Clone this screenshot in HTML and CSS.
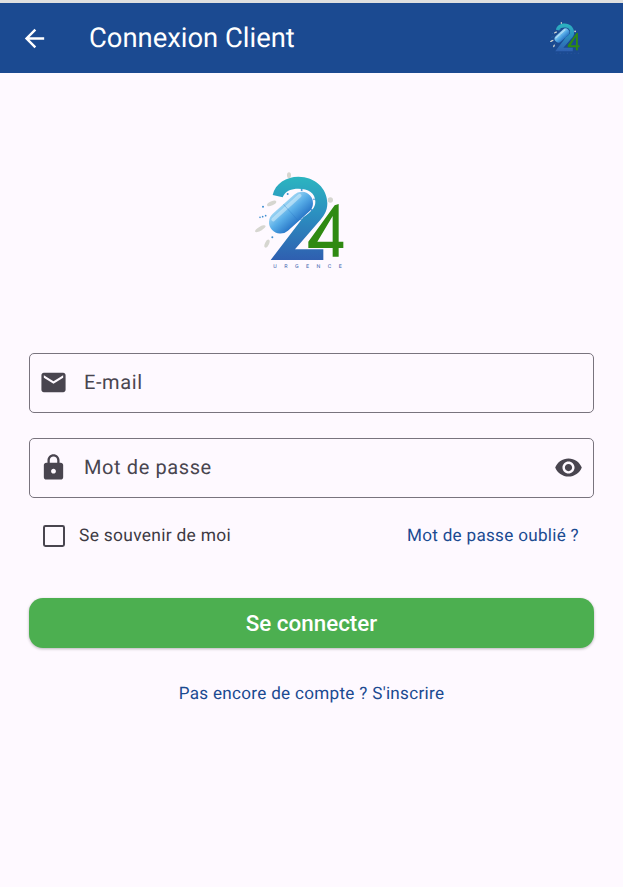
FILE: index.html
```html
<!DOCTYPE html>
<html lang="fr">
<head>
<meta charset="utf-8">
<title>Connexion Client</title>
<link rel="stylesheet" href="styles.css">
</head>
<body>
<header class="appbar">
  <svg class="icon back" viewBox="0 0 24 24"><path d="M20 11H7.83l5.59-5.59L12 4l-8 8 8 8 1.41-1.41L7.83 13H20v-2z"/></svg>
  <h1 class="title">Connexion Client</h1>
  <svg class="logo-small" viewBox="0 0 360 360">
    <defs>
      <linearGradient id="g2" x1="0" y1="0" x2="0" y2="1">
        <stop offset="0" stop-color="#2cb5c0"/>
        <stop offset=".45" stop-color="#2b8fc0"/>
        <stop offset="1" stop-color="#2f5fb0"/>
      </linearGradient>
      <linearGradient id="gc" x1="0" y1="0" x2="0" y2="1">
        <stop offset="0" stop-color="#9ad3f3"/>
        <stop offset=".45" stop-color="#58aee8"/>
        <stop offset="1" stop-color="#2a78c8"/>
      </linearGradient>
      <symbol id="logo" viewBox="0 0 360 360">
        <path fill="url(#g2)" d="M98 105C105 70 140 50 175 50C225 50 262 85 262 130C262 155 250 170 235 187L165 268H250V300H92L190 172C215 153 226 143 226 125C226 99 205 86 175 86C155 86 135 92 128 112Z"/>
        <path fill="#2f8a12" fill-rule="evenodd" d="M205 245L284 136L296 132V245H310V264H296V290H278V264H205ZM278 168L232 245H278Z"/>
        <g transform="rotate(-42 153 158)">
          <rect x="76" y="124" width="154" height="68" rx="34" fill="url(#gc)"/>
          <rect x="94" y="132" width="118" height="11" rx="5.5" fill="#d8f0fc" opacity=".55"/>
          <path d="M153 124V192" stroke="#2a78c8" stroke-width="1.5" opacity=".6"/>
        </g>
        <g fill="#d6d6d0">
          <ellipse cx="147" cy="46" rx="6" ry="9"/>
          <ellipse cx="95" cy="130" rx="15" ry="6" transform="rotate(-25 95 130)"/>
          <ellipse cx="61" cy="206" rx="18" ry="6" transform="rotate(-30 61 206)"/>
          <ellipse cx="81" cy="251" rx="6" ry="13" transform="rotate(25 81 251)"/>
          <circle cx="271" cy="120" r="8"/>
        </g>
        <g fill="#3f8fd0">
          <circle cx="69" cy="140" r="3"/><circle cx="60" cy="172" r="2.5"/><circle cx="68" cy="170" r="2.5"/><circle cx="77" cy="167" r="2.5"/>
          <circle cx="97" cy="232" r="3"/><circle cx="143" cy="102" r="3"/><circle cx="185" cy="90" r="3"/><circle cx="222" cy="118" r="2.5"/><circle cx="215" cy="150" r="3"/><circle cx="183" cy="178" r="2.5"/>
        </g>
        <text class="logo-word" x="100" y="324" textLength="205">URGENCE</text>
      </symbol>
    </defs>
    <use href="#logo"/>
  </svg>
</header>
<main class="page">
  <svg class="logo-large" viewBox="0 0 360 360"><use href="#logo"/></svg>
  <form class="form">
    <div class="field">
      <svg class="icon field-icon" viewBox="0 0 24 24"><path d="M20 4H4c-1.1 0-1.99.9-1.99 2L2 18c0 1.1.9 2 2 2h16c1.1 0 2-.9 2-2V6c0-1.1-.9-2-2-2zm0 4l-8 5-8-5V6l8 5 8-5v2z"/></svg>
      <span class="placeholder">E-mail</span>
    </div>
    <div class="field">
      <svg class="icon field-icon" viewBox="0 0 24 24"><path d="M18 8h-1V6c0-2.76-2.24-5-5-5S7 3.24 7 6v2H6c-1.1 0-2 .9-2 2v10c0 1.1.9 2 2 2h12c1.1 0 2-.9 2-2V10c0-1.1-.9-2-2-2zm-6 9c-1.1 0-2-.9-2-2s.9-2 2-2 2 .9 2 2-.9 2-2 2zm3.1-9H8.9V6c0-1.71 1.39-3.1 3.1-3.1 1.71 0 3.1 1.39 3.1 3.1v2z"/></svg>
      <span class="placeholder">Mot de passe</span>
      <svg class="icon field-icon eye" viewBox="0 0 24 24"><path d="M12 4.5C7 4.5 2.73 7.61 1 12c1.73 4.39 6 7.5 11 7.5s9.27-3.11 11-7.5c-1.73-4.39-6-7.5-11-7.5zM12 17c-2.76 0-5-2.24-5-5s2.24-5 5-5 5 2.24 5 5-2.24 5-5 5zm0-8c-1.66 0-3 1.34-3 3s1.34 3 3 3 3-1.34 3-3-1.34-3-3-3z"/></svg>
    </div>
    <div class="options">
      <span class="remember"><span class="checkbox"></span><span class="remember-label">Se souvenir de moi</span></span>
      <a class="link">Mot de passe oublié ?</a>
    </div>
    <button class="submit" type="button">Se connecter</button>
    <a class="link signup">Pas encore de compte ? S'inscrire</a>
  </form>
</main>
</body>
</html>
```

FILE: styles.css
```css
* { box-sizing: border-box; }
html, body { margin: 0; height: 100%; }
body {
  background: #fef9ff;
  font-family: Roboto, "Liberation Sans", sans-serif;
  color: #49454f;
  text-rendering: geometricPrecision;
}
.appbar {
  height: 73px;
  border-top: 3px solid #dfe0e0;
  background: #1b4a91;
  display: flex;
  align-items: center;
  padding: 0 38px 0 20px;
  color: #fff;
}
.icon { display: block; fill: currentColor; flex: none; }
.back { width: 29px; height: 29px; }
.title {
  margin: 0 0 1px 40px;
  font-size: 27.4px;
  font-weight: 400;
  flex: 1;
}
.logo-small { width: 40px; height: 40px; flex: none; }
.logo-word {
  font-family: Roboto, sans-serif;
  font-size: 16px;
  fill: #3a63ad;
}
.page { padding: 87px 29px 0; }
.logo-large { display: block; width: 120px; height: 120px; margin-left: 211px; }
.form { display: flex; flex-direction: column; margin-top: 73px; }
.field {
  height: 60px;
  border: 1.2px solid #79747e;
  border-radius: 5px;
  display: flex;
  align-items: center;
  padding: 0 10px 1px 9px;
  margin-bottom: 25px;
}
.field-icon { width: 29px; height: 29px; }
.placeholder {
  margin: 0 0 1px 16px;
  flex: 1;
  font-size: 20px;
  letter-spacing: .6px;
}
.options {
  display: flex;
  align-items: center;
  justify-content: space-between;
  height: 26px;
  padding: 0 15px 0 14px;
}
.remember { display: flex; align-items: center; }
.checkbox {
  width: 22px;
  height: 22px;
  border: 2.4px solid #49454f;
  border-radius: 2.4px;
}
.remember-label { margin-left: 14px; font-size: 17.4px; letter-spacing: .3px; color: #3d3943; }
.link { font-size: 17.1px; letter-spacing: .3px; color: #1b4a91; }
.submit {
  margin-top: 49px;
  height: 50px;
  border: 0;
  border-radius: 14px;
  background: #4caf50;
  color: #fff;
  font-family: inherit;
  font-size: 22.4px;
  font-weight: 500;
  box-shadow: 0 1px 3px rgba(0, 0, 0, .28);
}
.signup { margin-top: 36px; text-align: center; }
```
